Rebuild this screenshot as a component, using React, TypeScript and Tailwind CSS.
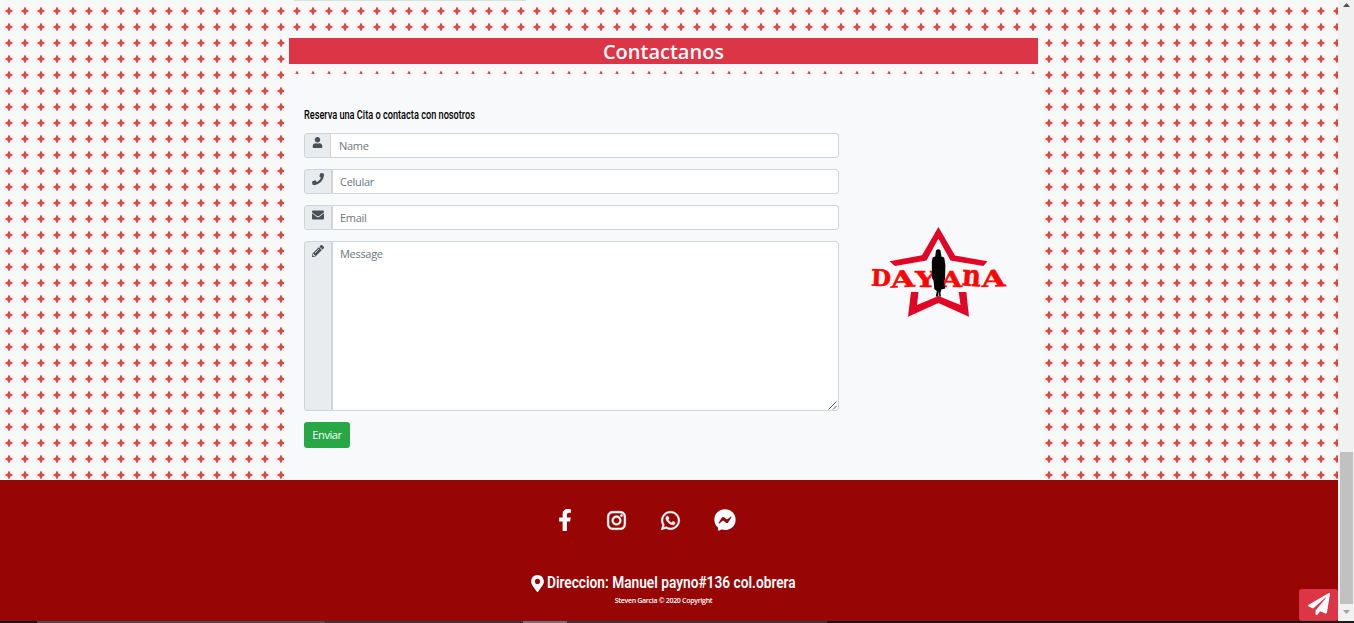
import type { ReactNode } from 'react';
import {
  FaEnvelope,
  FaFacebookF,
  FaFacebookMessenger,
  FaInstagram,
  FaMapMarkerAlt,
  FaPaperPlane,
  FaPencilAlt,
  FaPhone,
  FaUser,
  FaWhatsapp,
} from 'react-icons/fa';

function StarBackdrop() {
  return (
    <svg className="absolute inset-0 h-full w-full" aria-hidden="true">
      <defs>
        <pattern id="sparkle" width="16" height="16" x="1" y="3" patternUnits="userSpaceOnUse">
          <path
            d="M7.3 4.2 H8.7 L9.3 6.5 L11.4 7.2 V8.8 L9.3 9.5 L8.7 11.8 H7.3 L6.7 9.5 L4.6 8.8 V7.2 L6.7 6.5 Z"
            fill="#e8453a"
          />
        </pattern>
      </defs>
      <rect width="100%" height="100%" fill="url(#sparkle)" />
    </svg>
  );
}

function Logo() {
  return (
    <svg width="140" height="96" viewBox="868 224 140 96" aria-label="Dayana">
      <path
        d="M889.5 261.2 L922 255.2 L938.4 227 L955 255.4 L987.5 261.3 L983.5 266 L950.5 260.5 L938.4 238.5 L926.5 260.5 L895 266 Z"
        fill="#e10526"
      />
      <path
        d="M911 292 H918.5 L917 305 L938.4 296 L960.5 305 L958.7 292 H966.3 L969 316.7 L938.4 303 L908 316.7 Z"
        fill="#e10526"
      />
      <g fill="#fc0505" stroke="#fc0505" strokeWidth="0.5" fontFamily="DejaVu Serif" fontWeight="700" fontSize="23">
        <text x="871" y="286" textLength="20" lengthAdjust="spacingAndGlyphs" transform="rotate(2 881 278)">D</text>
        <text x="890.5" y="287" textLength="24" lengthAdjust="spacingAndGlyphs" transform="rotate(-3 903 278)">A</text>
        <text x="915" y="286.5" textLength="21" lengthAdjust="spacingAndGlyphs">Y</text>
        <text x="941" y="286.5" textLength="21" lengthAdjust="spacingAndGlyphs">A</text>
        <text x="962" y="286" textLength="19" fontSize="30" lengthAdjust="spacingAndGlyphs" transform="rotate(4 972 278)">n</text>
        <text x="981.5" y="286.5" textLength="24" lengthAdjust="spacingAndGlyphs" transform="rotate(-2 993 278)">A</text>
      </g>
      <path
        d="M936 250.5 Q938.3 247.8 940.6 250.5 L941.4 256.5 L944.2 257.5 L945.4 265 L945 279 L944 282 L945.2 288.5 L941.4 289.5 L940.4 293 L941 296.5 H939.3 L938.7 291 L938.2 296.5 H935.8 L936.8 291 L934.3 289 L933.6 281 L932 278 L931.8 262 L932.6 257.5 L935.2 256.5 Z"
        fill="#060606"
      />
    </svg>
  );
}

function Addon({ children, wide = true }: { children: ReactNode; wide?: boolean }) {
  return (
    <span
      className={`flex shrink-0 justify-center rounded-l-[3px] border border-[#ced4da] bg-[#e9ecef] text-[#495057] ${
        wide ? 'w-[28px] pt-[3px] pr-px text-[12px]' : 'w-[27px] pt-[3px] text-[11px]'
      }`}
    >
      {children}
    </span>
  );
}

const fieldClass =
  'min-w-0 flex-1 rounded-r-[3px] border border-[#ced4da] bg-white text-[11px] tracking-[-0.3px] placeholder:text-[#6c757d] placeholder:opacity-100 outline-none';

function ContactForm() {
  return (
    <form className="w-[535px]">
      <h2 className="h-[18px] whitespace-nowrap font-['Roboto'] text-[12px] leading-[18px] font-medium text-black">
        <span className="inline-block origin-left scale-x-[0.765]">Reserva una Cita o contacta con nosotros</span>
      </h2>
      <div className="mt-[9px] flex flex-col gap-[11px]">
        <div className="flex h-[25px]">
          <Addon wide={false}><FaUser /></Addon>
          <input className={`-ml-px px-[8px] pt-[2px] ${fieldClass}`} placeholder="Name" />
        </div>
        <div className="flex h-[25px]">
          <Addon><FaPhone /></Addon>
          <input className={`px-[7px] pt-[2px] ${fieldClass}`} placeholder="Celular" />
        </div>
        <div className="flex h-[25px]">
          <Addon><FaEnvelope /></Addon>
          <input className={`px-[7px] pt-[2px] ${fieldClass}`} placeholder="Email" />
        </div>
        <div className="relative flex h-[170px]">
          <Addon><FaPencilAlt /></Addon>
          <textarea className={`resize-none px-[7px] pt-[3px] leading-[17px] ${fieldClass}`} placeholder="Message" />
          <svg className="absolute right-[2px] bottom-[1px]" width="9" height="9" viewBox="0 0 9 9">
            <path d="M0.5 8.5 L8.5 0.5 M5 8.5 L8.5 5" stroke="#555" strokeWidth="1" fill="none" />
          </svg>
        </div>
      </div>
      <button type="button" className="mt-[11px] block h-[26px] w-[46px] rounded-[3px] bg-[#28a745] text-center text-[11px] tracking-[-0.4px] text-white">
        Enviar
      </button>
    </form>
  );
}

function Scrollbar() {
  return (
    <aside className="flex w-[16px] shrink-0 flex-col items-center bg-[#f1f1f1]">
      <svg width="16" height="17" viewBox="0 0 16 17">
        <path d="M5 7 L8.5 3 L12 7 Z" fill="#505050" />
      </svg>
      <div className="mt-[435px] ml-px h-[152px] w-[13px] bg-[#c1c1c1]" />
      <svg width="16" height="17" viewBox="0 0 16 17">
        <path d="M5 6 L8.5 10 L12 6 Z" fill="#a3a3a3" />
      </svg>
    </aside>
  );
}

export default function App() {
  return (
    <div className="flex h-[623px] w-[1354px] flex-col overflow-hidden bg-[#f8f8f8] font-['Open_Sans',sans-serif]">
      <div className="flex h-[621px]">
        <div className="relative flex w-[1338px] flex-col">
          <main className="relative h-[480px] overflow-hidden bg-[#f8f8f8]">
            <StarBackdrop />
            <div className="relative ml-[284px] flex h-full w-[760px] flex-col">
              <div className="ml-[10px] h-px w-[232px] bg-[#dedede]" />
              <h1 className="mt-[37px] ml-[5px] h-[26px] w-[749px] bg-[#dc3545] text-center text-[20px] leading-[27px] font-semibold text-white">
                Contactanos
              </h1>
              <section className="mt-[10px] flex flex-1 bg-[#f8f9fa] pt-[32px] pl-[20px]">
                <ContactForm />
                <div className="mt-[118px] ml-[29px]">
                  <Logo />
                </div>
              </section>
            </div>
          </main>
          <footer className="flex flex-1 flex-col items-center bg-[#970505] pr-[11px] text-white">
            <nav className="mt-[29px] mr-[36px] flex h-[22px] w-[212px] items-center">
              <span className="flex w-[51px] justify-center"><FaFacebookF size={22} /></span>
              <span className="flex w-[52px] justify-center"><FaInstagram size={21} stroke="currentColor" strokeWidth={14} /></span>
              <span className="flex w-[56px] justify-center"><FaWhatsapp size={21} stroke="currentColor" strokeWidth={14} /></span>
              <span className="flex w-[53px] justify-center"><FaFacebookMessenger size={22} /></span>
            </nav>
            <div className="mt-[40px] flex h-[24px] w-[265px] items-center">
              <FaMapMarkerAlt size={17} className="-ml-[2px] shrink-0" />
              <span className="ml-px inline-block origin-left scale-x-[0.807] font-['Roboto'] text-[17px] font-semibold whitespace-nowrap">
                Direccion: Manuel payno#136 col.obrera
              </span>
            </div>
            <p className="text-[7px] leading-[11px] font-semibold tracking-[-0.3px]">Steven Garcia © 2020 Copyright</p>
          </footer>
          <button
            type="button"
            aria-label="Enviar mensaje"
            className="absolute right-0 bottom-0 flex h-[32px] w-[39px] items-center justify-center rounded-[3px] bg-[#dc3545] pb-[2px] text-white"
          >
            <FaPaperPlane size={22} />
          </button>
        </div>
        <Scrollbar />
      </div>
      <div className="flex h-[2px] bg-[#191919]">
        <div className="ml-[37px] h-full w-[288px] bg-[#4b4b4b]" />
        <div className="h-full w-[198px] bg-[#373737]" />
        <div className="h-full w-[44px] bg-[#737373]" />
        <div className="h-full w-[260px] bg-[#373737]" />
      </div>
    </div>
  );
}
